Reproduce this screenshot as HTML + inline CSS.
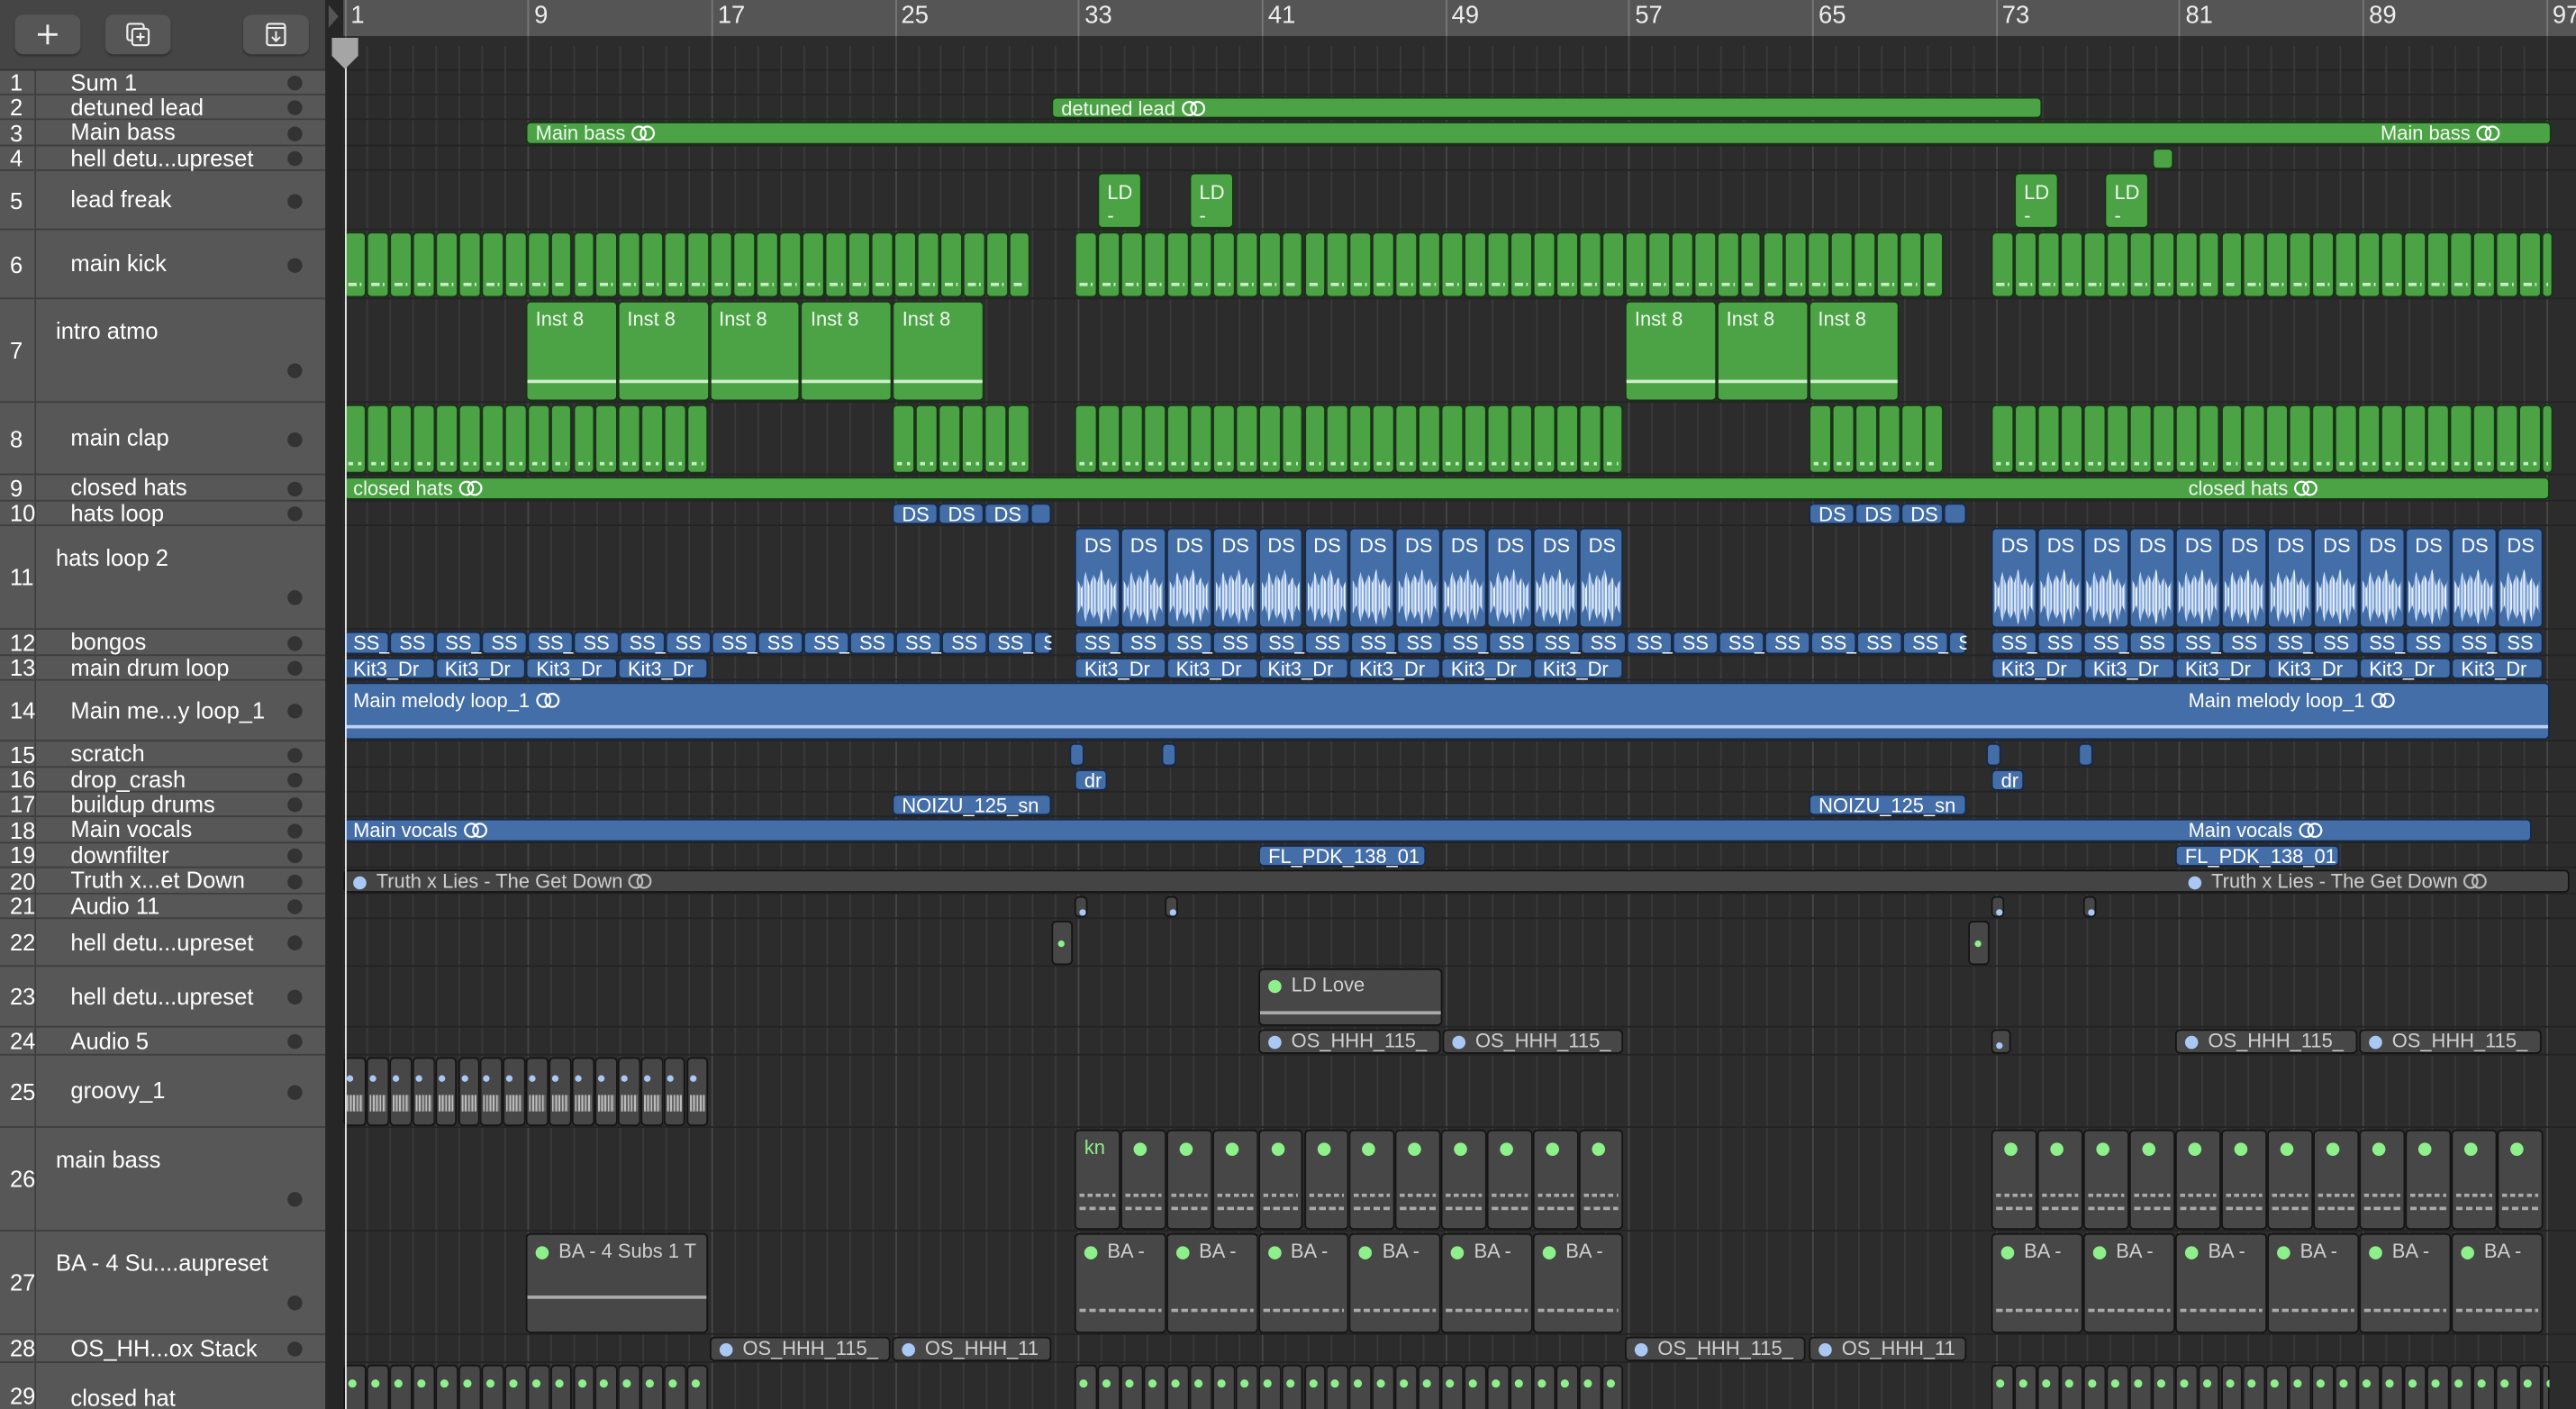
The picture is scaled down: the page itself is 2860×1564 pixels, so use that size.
<!DOCTYPE html>
<html><head><meta charset="utf-8">
<style>
html,body{margin:0;padding:0;background:#2b2b2b;overflow:hidden;width:2860px;height:1564px}
#s{position:absolute;left:0;top:0;width:1568px;height:857px;transform:scale(1.8240,1.8250);transform-origin:0 0;background:#2c2c2c;font-family:"Liberation Sans",sans-serif;overflow:hidden}
.a{position:absolute;box-sizing:border-box}
.g,.b,.k{overflow:visible;clip-path:inset(-4px 0 -4px 0);white-space:nowrap;font-size:12px;padding-left:5px;border-radius:3px}
.g{background:#4ba345;border:1px solid #173515;color:#f0f8ee}
.b{background:#436ea7;border:1px solid #15294a;color:#fff}
.k{background:#474747;border:1px solid #141414;color:#cfcfcf}
.tn{position:absolute;left:0;width:198px;background:#575757;border-bottom:1px solid #3e3e3e;box-sizing:border-box;color:#fff;font-size:14px}
.num{position:absolute;left:0;width:22px;border-right:1px solid #3e3e3e;height:100%;box-sizing:border-box;padding-left:6px}
.dot{position:absolute;left:175px;width:9px;height:9px;border-radius:50%;background:#333}
.gd{display:inline-block;width:8px;height:8px;border-radius:50%;background:#8ef08a;margin-right:6px;vertical-align:-1px}
.bd{display:inline-block;width:8px;height:8px;border-radius:50%;background:#a9c8f4;margin-right:6px;vertical-align:-1px}
.btn{position:absolute;top:9px;width:40px;height:24px;border-radius:5px;background:#565656;box-shadow:0 1px 1px #333}
</style></head><body>
<div id="s">
 <div class="a" style="left:0;top:0;width:198px;height:43px;background:#454545;border-bottom:1px solid #333"></div>
 <div class="btn" style="left:9px"><svg width="40" height="24"><path d="M20 6v12M14 12h12" stroke="#eee" stroke-width="1.6"/></svg></div>
 <div class="btn" style="left:64px"><svg width="40" height="24"><rect x="13.5" y="5.5" width="10" height="10" rx="1.5" fill="none" stroke="#eee" stroke-width="1.2"/><rect x="16.5" y="8.5" width="10" height="10" rx="1.5" fill="#565656" stroke="#eee" stroke-width="1.2"/><path d="M21.5 11v5M19 13.5h5" stroke="#eee" stroke-width="1.2"/></svg></div>
 <div class="btn" style="left:148px"><svg width="40" height="24"><rect x="14.5" y="5.5" width="11" height="13" rx="1.5" fill="none" stroke="#eee" stroke-width="1.2"/><path d="M14.5 8h11M20 10v6M17.5 13.5l2.5 2.5 2.5-2.5" fill="none" stroke="#eee" stroke-width="1.1"/></svg></div>
 <div class="a" style="left:198px;top:0;width:11px;height:857px;background:#262626"></div>
 <div class="a" style="left:209px;top:0;width:1359px;height:22px;background:#555"></div>
 <div class="a" style="left:209px;top:22px;width:1359px;height:21px;background:#2c2c2c;border-bottom:1px solid #222"></div>
 <div id="ruler"></div>
 <div id="side"></div>
 <div id="grid"></div>
 <div id="reg"></div>
 <div class="a" style="left:209.5px;top:26px;width:1px;height:831px;background:#e8e8e8"></div>
 <svg class="a" style="left:201px;top:22px" width="18" height="22"><path d="M1 1h16v11l-8 8-8-8z" fill="#a5a5a5"/></svg>
 <svg class="a" style="left:199px;top:2px" width="8" height="16"><path d="M1 1l6 7-6 7z" fill="#555"/></svg>
</div>
<script>
const rows=[[43,58,"Sum 1"],[58,73,"detuned lead"],[73,89,"Main bass"],[89,104,"hell detu...upreset"],[104,140,"lead freak"],[140,182,"main kick"],[182,245,"intro atmo"],[245,289,"main clap"],[289,305,"closed hats"],[305,320,"hats loop"],[320,383,"hats loop 2"],[383,399,"bongos"],[399,414,"main drum loop"],[414,451,"Main me...y loop_1"],[451,467,"scratch"],[467,482,"drop_crash"],[482,497,"buildup drums"],[497,513,"Main vocals"],[513,528,"downfilter"],[528,544,"Truth x...et Down"],[544,559,"Audio 11"],[559,588,"hell detu...upreset"],[588,625,"hell detu...upreset"],[625,642,"Audio 5"],[642,686,"groovy_1"],[686,749,"main bass"],[749,812,"BA - 4 Su....aupreset"],[812,829,"OS_HH...ox Stack"],[829,870,"closed hat"]];
const BW=13.96,X0=209.5;
let h="";
rows.forEach((r,i)=>{const H=r[1]-r[0];
 let ty=H/2-8;
 if(i==28)ty=14;
 let nameTop=(i==6||i==10||i==25)?11:(i==26?11:ty-1);
 let left=(i==6||i==10||i==25||i==26)?34:43;
 let dotTop=(i==6||i==10||i==25||i==26)?H-24:H/2-4.5;
 h+=`<div class="tn" style="top:${r[0]}px;height:${H}px"><div class="num" style="line-height:${H}px">${i+1}</div><div class="a" style="left:${left}px;top:${nameTop}px;line-height:16px">${r[2]}</div>${i<28?`<div class="dot" style="top:${dotTop}px"></div>`:""}</div>`;
});
document.getElementById("side").innerHTML=h;
let g="";
for(let b=1;b<=97;b++){const x=X0+(b-1)*BW;const maj=(b-1)%8==0;
 g+=`<div class="a" style="left:${x}px;top:${maj?22:28}px;width:1px;height:${857-(maj?22:28)}px;background:${maj?'#474747':'#3a3a3a'}"></div>`;}
rows.forEach(r=>{g+=`<div class="a" style="left:209px;top:${r[1]-1}px;width:1359px;height:1px;background:#242424"></div>`});
document.getElementById("grid").innerHTML=g;
let ru="";[1,9,17,25,33,41,49,57,65,73,81,89,97].forEach(n=>{const x=X0+(n-1)*BW;ru+=`<div class="a" style="left:${x}px;top:0;width:1px;height:22px;background:#777"></div><div class="a" style="left:${x+4}px;top:1px;color:#eee;font-size:15px">${n}</div>`});
document.getElementById("ruler").innerHTML=ru;
let o="";
function R(x1,x2,t,c,lab,st){const r=rows[t-1];o+=`<div class="a ${c}" style="left:${x1}px;top:${r[0]+1}px;width:${x2-x1}px;height:${r[1]-r[0]-2}px;line-height:${Math.min(13,r[1]-r[0]-2)}px;${st||""}">${lab||""}</div>`;}
function S(x1,x2,w,t,c,lab,inner,st){for(let x=x1;x<x2-1;x+=w){const e=Math.min(x+w,x2);const r=rows[t-1];o+=`<div class="a ${c}" style="left:${x}px;top:${r[0]+1}px;width:${e-x}px;height:${r[1]-r[0]-2}px;line-height:13px;${st||""}">${typeof lab=="function"?lab(x):(lab||"")}${inner||""}</div>`;}}
const lp=' <svg width="16" height="10" style="vertical-align:-1px"><circle cx="5" cy="5" r="4" fill="none" stroke="#fff" stroke-width="1.2"/><circle cx="10" cy="5" r="4" fill="none" stroke="#fff" stroke-width="1.2"/></svg>';
R(640,1243,2,"g","detuned lead"+lp);
R(320,1553,3,"g","Main bass"+lp+'<span style="position:absolute;left:1128px">Main bass'+lp+'</span>');
R(1310,1323,4,"g");
[668,724,1226,1281].forEach(x=>R(x,x+27,5,"g",'<div style="padding-top:4px;line-height:14px">LD<br>-</div>'));
const dash='<div class="a" style="left:2px;right:2px;bottom:6px;height:2px;background:repeating-linear-gradient(90deg,#c8ecc4 0 5px,transparent 5px 7px)"></div>';
S(209,627,13.95,6,"g","",dash);S(654,1183,13.95,6,"g","",dash);S(1212,1548,13.95,6,"g","",dash);
const il='<div class="a" style="left:0;right:0;top:47px;height:2px;background:#cdeccb"></div>';
S(320,599,55.8,7,"g","Inst 8",il,"line-height:20px");S(989,1157,55.8,7,"g","Inst 8",il,"line-height:20px");
const cd='<div class="a" style="left:2px;right:2px;bottom:4px;height:2px;background:repeating-linear-gradient(90deg,#c8ecc4 0 3px,transparent 3px 6px)"></div>';
[[209,431],[543,627],[654,988],[1101,1183],[1212,1548]].forEach(a=>S(a[0],a[1],13.95,8,"g","",cd));
R(209,1552,9,"g","closed hats"+lp+'<span style="position:absolute;left:1122px">closed hats'+lp+'</span>');
S(543,627,28,10,"b","DS");R(627,640,10,"b");S(1101,1183,28,10,"b","DS");R(1183,1197,10,"b");
const wf='<div class="a" style="left:1px;right:1px;top:24px;height:34px;background:repeating-linear-gradient(90deg,#d7e6fb 0 1px,#8fb0de 1px 2px,#e8f0fc 2px 3px,#6f95cc 3px 4px);clip-path:polygon(0 20%,10% 35%,20% 5%,30% 30%,40% 10%,50% 25%,60% 0,70% 30%,80% 15%,90% 35%,100% 20%,100% 80%,90% 65%,80% 95%,70% 70%,60% 100%,50% 75%,40% 90%,30% 70%,20% 95%,10% 65%,0 80%)"></div>';
S(654,988,27.9,11,"b","DS",wf,"line-height:20px");S(1212,1548,28,11,"b","DS",wf,"line-height:20px");
let ss=x=>Math.round(x/28)%2?"SS_":"SS";
S(209,640,28,12,"b",ss);S(654,1197,28,12,"b",ss);S(1212,1548,28,12,"b",ss);
S(209,431,55.7,13,"b","Kit3_Dr");S(654,988,55.8,13,"b","Kit3_Dr");S(1212,1548,56,13,"b","Kit3_Dr");
R(209,1552,14,"b",'Main melody loop_1'+lp+'<span style="position:absolute;left:1122px;top:0">Main melody loop_1'+lp+'</span><div class="a" style="left:0;right:0;top:25px;height:2px;background:#bcd3f3"></div>',"line-height:20px");
[651,707,1209,1265].forEach(x=>R(x,x+9,15,"b"));
R(654,674,16,"b","dr");R(1212,1232,16,"b","dr");
R(543,640,17,"b","NOIZU_125_sn");R(1101,1197,17,"b","NOIZU_125_sn");
R(209,1541,18,"b","Main vocals"+lp+'<span style="position:absolute;left:1122px">Main vocals'+lp+'</span>');
R(766,868,19,"b","FL_PDK_138_01");R(1324,1424,19,"b","FL_PDK_138_01");
const lpg=lp.replace(/#fff/g,"#bbb");
R(209,1564,20,"k",'<span class="bd"></span>Truth x Lies - The Get Down'+lpg+'<span style="position:absolute;left:1122px"><span class="bd"></span>Truth x Lies - The Get Down'+lpg+'</span>',"background:#444");
[654,709,1212,1268].forEach(x=>R(x,x+8,21,"k",'<span class="bd" style="width:4px;height:4px;margin:0 0 0 -3px"></span>'));
R(640,653,22,"k",'<span class="gd" style="width:4px;height:4px;margin:0 0 0 -2px"></span>',"line-height:20px");R(1198,1211,22,"k",'<span class="gd" style="width:4px;height:4px;margin:0 0 0 -2px"></span>',"line-height:20px");
R(766,878,23,"k",'<span class="gd"></span>LD Love<div class="a" style="left:0;right:0;top:25px;height:2px;background:#aaa"></div>',"line-height:18px");
R(766,877,24,"k",'<span class="bd"></span>OS_HHH_115_');R(878,988,24,"k",'<span class="bd"></span>OS_HHH_115_');R(1212,1224,24,"k",'<span class="bd" style="width:4px;height:4px;margin:0 0 0 -3px"></span>');
R(1324,1435,24,"k",'<span class="bd"></span>OS_HHH_115_');R(1436,1547,24,"k",'<span class="bd"></span>OS_HHH_115_');
const gw='<div class="a" style="left:1px;right:1px;top:22px;height:10px;background:repeating-linear-gradient(90deg,#bbb 0 1px,#666 1px 2px)"></div>';
S(209,431,13.9,25,"k",'<span class="bd" style="width:4px;height:4px;margin:0 0 0 -3px"></span>',gw,"padding-left:4px;line-height:18px");
const kd='<div class="a" style="left:2px;right:2px;top:38px;height:2px;background:repeating-linear-gradient(90deg,#aaa 0 3px,transparent 3px 5px)"></div><div class="a" style="left:2px;right:2px;top:46px;height:2px;background:repeating-linear-gradient(90deg,#aaa 0 4px,transparent 4px 6px)"></div>';
S(654,988,27.9,26,"k",x=>x<660?'<span style="color:#8ef08a">kn</span>':'<span class="gd" style="margin-left:2px"></span>',kd,"line-height:20px");
S(1212,1548,28,26,"k",'<span class="gd" style="margin-left:2px"></span>',kd,"line-height:20px");
const bd2='<div class="a" style="left:2px;right:2px;top:45px;height:2px;background:repeating-linear-gradient(90deg,#aaa 0 4px,transparent 4px 6px)"></div>';
R(320,431,27,"k",'<span class="gd"></span>BA - 4 Subs 1 T<div class="a" style="left:0;right:0;top:37px;height:2px;background:#aaa"></div>',"line-height:20px");
S(654,988,55.8,27,"k",'<span class="gd"></span>BA -',bd2,"line-height:20px");S(1212,1548,56,27,"k",'<span class="gd"></span>BA -',bd2,"line-height:20px");
R(432,542,28,"k",'<span class="bd"></span>OS_HHH_115_');R(543,640,28,"k",'<span class="bd"></span>OS_HHH_11');
R(989,1099,28,"k",'<span class="bd"></span>OS_HHH_115_');R(1101,1197,28,"k",'<span class="bd"></span>OS_HHH_11');
[[209,431],[654,988],[1212,1548]].forEach(a=>S(a[0],a[1],13.95,29,"k",'<span class="gd" style="width:5px;height:5px;margin:0 0 0 -1px"></span>',"","line-height:16px;padding-left:3px"));
document.getElementById("reg").innerHTML=o;
</script>
</body></html>
